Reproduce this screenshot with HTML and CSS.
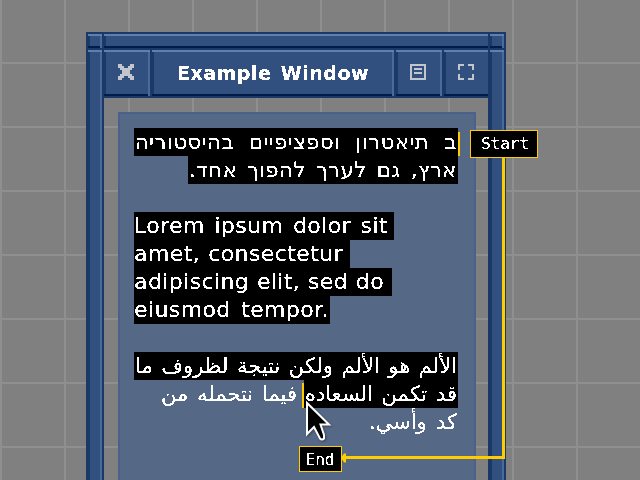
FILE: index.html
```
<!DOCTYPE html>
<html lang="en">
<head>
<meta charset="utf-8">
<title>Example Window</title>
<link rel="stylesheet" href="styles.css">
</head>
<body>
<svg class="defs" width="0" height="0" aria-hidden="true">
  <filter id="crisp" x="0" y="0" width="100%" height="100%" color-interpolation-filters="sRGB">
    <feComponentTransfer><feFuncR type="discrete" tableValues="1 1"/><feFuncG type="discrete" tableValues="1 1"/><feFuncB type="discrete" tableValues="1 1"/><feFuncA type="discrete" tableValues="0 0 1 1 1"/></feComponentTransfer>
  </filter>
</svg>
<div class="window">
  <div class="top"><i class="cell"></i><i class="cell open"></i><i class="cell"></i></div>
  <div class="main">
    <div class="rail"><i class="cell"></i></div>
    <div class="inside">
      <div class="titlebar">
        <div class="cell btn"><svg width="16" height="16" viewBox="0 0 8 8" shape-rendering="crispEdges"><path d="M0 0h2v1h1v1h2V1h1V0h2v2H7v1H6v2h1v1h1v2H6V7H5V6H3v1H2v1H0V6h1V5h1V3H1V2H0z"/></svg></div>
        <div class="cell title"><span class="px">Example Window</span></div>
        <div class="cell btn"><svg width="16" height="16" viewBox="0 0 8 8" shape-rendering="crispEdges"><path fill-rule="evenodd" d="M0 0h8v8H0zM1 1v6h6V1zM2 2h4v1H2zM2 4h4v1H2z"/></svg></div>
        <div class="cell btn open"><svg width="16" height="16" viewBox="0 0 8 8" shape-rendering="crispEdges"><path d="M0 0h3v1H1v2H0zM5 0h3v3H7V1H5zM0 5h1v2h2v1H0zM7 5h1v3H5V7h2z"/></svg></div>
      </div>
      <div class="panel">
        <p class="he" dir="rtl" lang="he">
          <span class="line sel he1"><span class="px">ב תיאטרון וספציפיים בהיסטוריה</span><i class="caret caret-start"></i></span>
          <span class="line sel he2"><span class="px">ארץ, גם לערך להפוך אחד.</span></span>
        </p>
        <p class="la">
          <span class="line sel la1"><span class="px">Lorem ipsum dolor sit</span></span>
          <span class="line sel la2"><span class="px">amet, consectetur</span></span>
          <span class="line sel la3"><span class="px">adipiscing elit, sed do</span></span>
          <span class="line sel la4"><span class="px">eiusmod tempor.</span></span>
        </p>
        <p class="ar" dir="rtl" lang="ar">
          <span class="line sel ar1"><span class="px">الألم هو الألم ولكن نتيجة لظروف ما</span></span>
          <span class="row"><span class="line sel ar2"><span class="px">قد تكمن السعاده</span><i class="caret caret-end"></i></span><span class="line ar3"><span class="px">فيما نتحمله من</span></span></span>
          <span class="line ar4"><span class="px">كد وأسي.</span></span>
        </p>
      </div>
    </div>
    <div class="rail"><i class="cell"></i></div>
  </div>
</div>
<svg class="connector" width="640" height="480" viewBox="0 0 640 480"><path d="M503.500 158V457.500H345" fill="none" stroke="#fc0" stroke-width="3"/><path d="M341 457.500l3-4h2v9h-2z" fill="#fc0"/></svg>
<div class="tag tag-start"><span class="tagtext">Start</span></div>
<div class="tag tag-end"><span class="tagtext">End</span></div>
<svg class="pointer" width="28" height="44" viewBox="0 0 28 44"><path d="M2 3V34L9 27L15 38.500Q17 40.500 19 38.500L19 35L15.500 24.500H24Z" fill="#000" stroke="#fff" stroke-width="2"/></svg>
</body>
</html>
```
FILE: styles.css
```
:root {
  --edge: #1a3966;
  --fill: #31507f;
  --light: #6080b0;
  --side: #4a6a99;
  --navy: #001c4a;
}
* { box-sizing: border-box; }
body {
  margin: 0;
  width: 640px;
  height: 480px;
  overflow: hidden;
  position: relative;
  background-color: #808080;
  background-image:
    linear-gradient(90deg, #8f8f8f 2px, transparent 2px),
    linear-gradient(#8f8f8f 2px, transparent 2px);
  background-size: 64px 64px;
  background-position: 0 0, 0 -2px;
  color: #fff;
  font-family: "DejaVu Sans", sans-serif;
}
.defs { position: absolute; }
.window { width: 420px; height: 470px; margin: 32px 0 0 86px; position: absolute; display: flex; flex-direction: column; }
.cell {
  display: block;
  background: var(--fill);
  box-shadow: inset 0 2px var(--light), inset -2px 0 var(--side), inset 0 -2px var(--navy), inset 2px 0 var(--edge);
}
.open { box-shadow: inset 0 2px var(--light), inset 0 -2px var(--navy), inset 2px 0 var(--edge); }
.top { display: grid; grid-template-columns: 14px 384px 14px; gap: 2px; padding: 2px 2px 0; height: 16px; background: var(--edge); }
.main { display: flex; flex: 1; }
.rail { width: 18px; padding: 2px 2px 0; background: var(--edge); }
.rail .cell { height: 100%; }
.inside { width: 384px; display: flex; flex-direction: column; }
.titlebar { display: grid; grid-template-columns: 46px 242px 46px 44px; gap: 2px; height: 50px; padding: 2px 0; background: var(--edge); }
.btn, .title { display: flex; align-items: center; justify-content: center; }
.btn { padding: 0 2px 2px 0; }
.btn.open { padding-right: 0; }
.btn svg { fill: #c3c6cc; }
.title { font-size: 19px; font-weight: 700; letter-spacing: .5px; }
.title .px { width: 192px; line-height: 28px; }
.panel { flex: 1; margin: 14px 12px 0 14px; padding: 14px 16px 14px 14px; border: 2px solid #4a6289; border-bottom: 0; background: #556885; }
p { margin: 0 0 28px; }
.line { display: block; position: relative; height: 28px; line-height: 28px; white-space: nowrap; }
.px { display: block; height: 28px; text-align-last: justify; filter: url(#crisp); }
.sel { background: #000; }
.row { display: flex; }
.he .line { font-size: 21px; letter-spacing: .6px; padding: 0 1px; }
.he1 { width: 324px; }
.he2 { width: 270px; }
.la .line { font-size: 22px; letter-spacing: .4px; }
.la1 { width: 260px; padding-right: 6px; }
.la2 { width: 216px; padding-right: 7px; }
.la3 { width: 258px; padding-right: 8px; }
.la4 { width: 196px; padding-right: 1px; }
.ar .line { font-size: 21px; padding: 0 1px; }
.ar1 { width: 324px; }
.ar2 { width: 154px; }
.ar3 { width: 138px; margin-right: 6px; }
.ar4 { width: 90px; }
.caret { position: absolute; width: 2px; background: #fc0; }
.caret-start { right: -2px; top: 4px; height: 24px; }
.caret-end { left: -2px; top: 3px; height: 25px; }
.connector { position: absolute; left: 0; top: 0; }
.tag { position: absolute; background: #000; border: 1px solid #fc0; font: 16px/26px "DejaVu Sans Mono", monospace; text-align: center; }
.tagtext { display: block; filter: url(#crisp); }
.tag-start { left: 470px; top: 130px; width: 68px; height: 28px; padding-left: 2px; }
.tag-end { left: 299px; top: 446px; width: 43px; height: 26px; line-height: 25px; padding-right: 1px; }
.pointer { position: absolute; left: 305px; top: 400px; filter: drop-shadow(1px 1px 1px rgba(0, 0, 0, .35)); }
```
